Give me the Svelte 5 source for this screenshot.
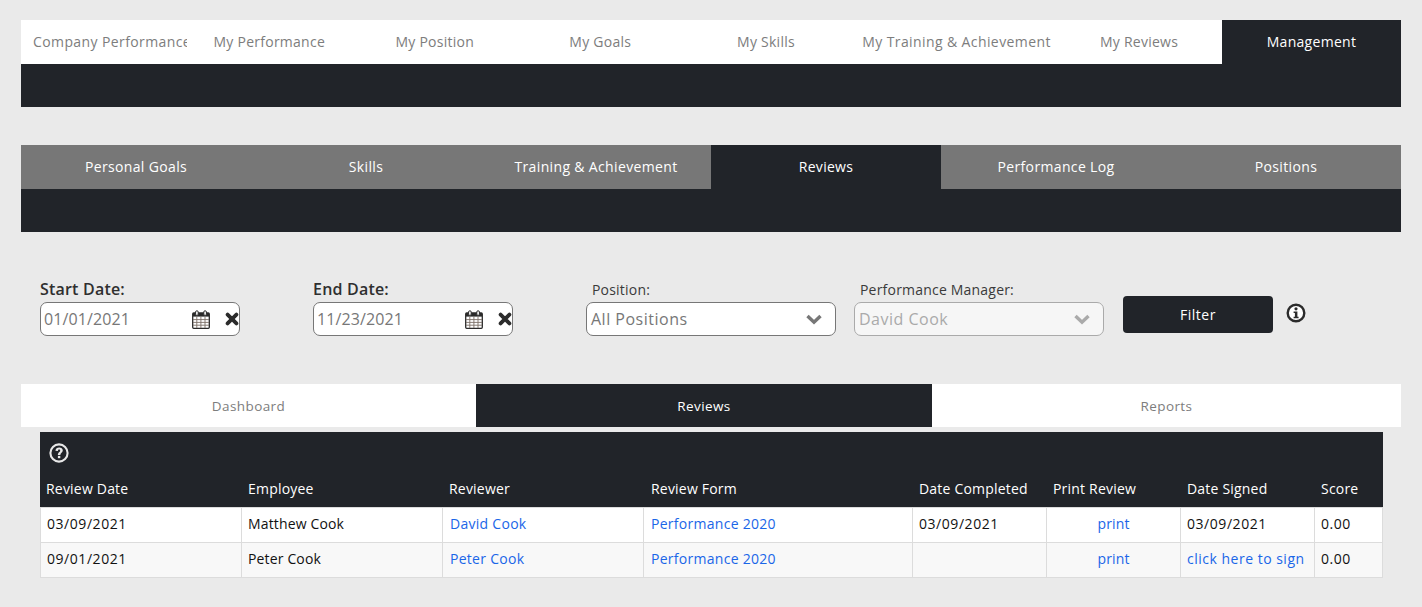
<script>
  const top = [
    { t: 'Company Performance', w: 165.5, cls: 'clip' },
    { t: 'My Performance', w: 165.5 },
    { t: 'My Position', w: 165.5 },
    { t: 'My Goals', w: 165.5 },
    { t: 'My Skills', w: 166 },
    { t: 'My Training & Achievement', w: 207, cls: 'shift' },
    { t: 'My Reviews', w: 166 },
    { t: 'Management', w: 179, cls: 'active' }
  ];
  const sub = ['Personal Goals', 'Skills', 'Training & Achievement', 'Reviews', 'Performance Log', 'Positions'];
  const inner = [
    { t: 'Dashboard', w: 455 },
    { t: 'Reviews', w: 456 },
    { t: 'Reports', w: 469 }
  ];
  const cols = ['Review Date', 'Employee', 'Reviewer', 'Review Form', 'Date Completed', 'Print Review', 'Date Signed', 'Score'];
  const rows = [
    ['03/09/2021', 'Matthew Cook', 'David Cook', 'Performance 2020', '03/09/2021', 'print', '03/09/2021', '0.00'],
    ['09/01/2021', 'Peter Cook', 'Peter Cook', 'Performance 2020', '', 'print', 'click here to sign', '0.00']
  ];
  const isLink = (v, i) => i === 2 || i === 3 || i === 5 || v === 'click here to sign';
  const isNum = (v) => /^[\d/.]+$/.test(v);
</script>

{#snippet calendar()}
  <svg class="cal" viewBox="0 0 18 19" width="18" height="19" aria-hidden="true">
    <rect x="0.7" y="3" width="16.6" height="15.3" rx="1" fill="#fff" stroke="#2a2a2a" stroke-width="1.3"/>
    <rect x="1" y="3" width="16" height="3.6" fill="#2a2a2a"/>
    <rect x="3.6" y="0.8" width="2.6" height="4.6" rx="1.2" fill="#fff" stroke="#2a2a2a"/>
    <rect x="11.8" y="0.8" width="2.6" height="4.6" rx="1.2" fill="#fff" stroke="#2a2a2a"/>
    <path d="M1 9.6H17M1 12.4H17M1 15.2H17M4.8 6.6V18M8.9 6.6V18M13 6.6V18" stroke="#7c6f68" stroke-width="0.9" fill="none"/>
  </svg>
{/snippet}

{#snippet cross()}
  <svg class="x" viewBox="0 0 14 14" width="14" height="14" aria-hidden="true">
    <path d="M2.6 2.6L11.4 11.4M11.4 2.6L2.6 11.4" stroke="#2b2b2b" stroke-width="3.8" stroke-linecap="round" fill="none"/>
  </svg>
{/snippet}

{#snippet chevron()}
  <svg class="chev" viewBox="0 0 18 12" width="18" height="12" aria-hidden="true">
    <path d="M2.5 3L9 9.2L15.5 3" stroke="currentColor" stroke-width="3.4" fill="none"/>
  </svg>
{/snippet}

<div class="page">
  <nav class="bar">
    <div class="tabs white">
      {#each top as tab}
        <div class="tab {tab.cls ?? ''}" style="width:{tab.w}px"><span>{tab.t}</span></div>
      {/each}
    </div>
    <div class="strip"></div>
  </nav>

  <nav class="bar second">
    <div class="tabs grey">
      {#each sub as t}
        <div class="tab even" class:active={t === 'Reviews'}>{t}</div>
      {/each}
    </div>
    <div class="strip"></div>
  </nav>

  <section class="filters">
    <div class="field date">
      <div class="bold">Start Date:</div>
      <div class="input"><span class="val">01/01/2021</span>{@render calendar()}{@render cross()}</div>
    </div>
    <div class="field date end">
      <div class="bold">End Date:</div>
      <div class="input"><span class="val">11/23/2021</span>{@render calendar()}{@render cross()}</div>
    </div>
    <div class="field sel pos">
      <div class="lab">Position:</div>
      <div class="select"><span>All Positions</span>{@render chevron()}</div>
    </div>
    <div class="field sel mgr">
      <div class="lab">Performance Manager:</div>
      <div class="select disabled"><span>David Cook</span>{@render chevron()}</div>
    </div>
    <button class="filter">Filter</button>
    <svg class="info" viewBox="0 0 20 20" width="20" height="20" aria-hidden="true">
      <circle cx="10" cy="10" r="8.3" fill="#fff" stroke="#2b2b2b" stroke-width="2.4"/>
      <circle cx="10" cy="5.8" r="1.6" fill="#2b2b2b"/>
      <path d="M7.6 8.4H11.4V13.8H12.6V15.3H7.6V13.8H8.9V9.9H7.6Z" fill="#2b2b2b"/>
    </svg>
  </section>

  <div class="tabs inner">
    {#each inner as tab}
      <div class="tab" class:active={tab.t === 'Reviews'} style="width:{tab.w}px">{tab.t}</div>
    {/each}
  </div>

  <section class="tablewrap">
    <div class="helprow">
      <svg viewBox="0 0 20 20" width="20" height="20" aria-hidden="true">
        <circle cx="10" cy="10" r="8.6" fill="none" stroke="#e8e8e8" stroke-width="2.1"/>
        <path d="M6.4 7.8C6.5 5.6 8.2 4.4 10.2 4.4C12.2 4.4 13.8 5.6 13.8 7.5C13.8 9.7 11.3 9.9 11.3 12H8.9C8.9 9.2 11.2 9 11.2 7.7C11.2 7 10.8 6.6 10.1 6.6C9.4 6.6 9 7.1 8.9 7.9Z" fill="#e8e8e8"/>
        <rect x="8.9" y="12.9" width="2.4" height="2.3" fill="#e8e8e8"/>
      </svg>
    </div>
    <table>
      <colgroup>
        <col style="width:202px"/><col style="width:201px"/><col style="width:201px"/><col style="width:269px"/>
        <col style="width:134px"/><col style="width:134px"/><col style="width:134px"/><col style="width:68px"/>
      </colgroup>
      <thead>
        <tr>{#each cols as c, i}<th class:form={i === 3}>{c}</th>{/each}</tr>
      </thead>
      <tbody>
        {#each rows as row}
          <tr>
            {#each row as v, i}
              <td class:center={i === 5} class:num={isNum(v)} class:sign={v === 'click here to sign'} class:pad={i === 2 || i === 3}>
                {#if isLink(v, i)}<span class="link">{v}</span>{:else}{v}{/if}
              </td>
            {/each}
          </tr>
        {/each}
      </tbody>
    </table>
  </section>
</div>

<style>
  :global(body) {
    margin: 0;
    background: #eaeaea;
    font-family: "Open Sans", "Liberation Sans", sans-serif;
  }
  .page {
    padding: 20px 21px 0;
    height: 587px;
    overflow: hidden;
    font-size: 14px;
    letter-spacing: 0.1px;
  }
  .bar { display: block; }
  .second { margin-top: 38px; }
  .tabs { display: flex; height: 44px; }
  .tab {
    box-sizing: border-box;
    display: flex;
    align-items: center;
    justify-content: center;
    white-space: nowrap;
    overflow: hidden;
    flex: none;
    padding-bottom: 2px;
  }
  .even { flex: 1 1 0; }
  .white { background: #fff; color: #7d7d7d; letter-spacing: 0.25px; }
  .clip { justify-content: flex-start; padding-left: 12px; letter-spacing: 0.4px; }
  .shift { padding-left: 8px; letter-spacing: 0.4px; }
  .grey { background: #777; color: #fff; font-weight: 500; letter-spacing: 0.35px; }
  .tab.active { background: #212429; color: #fff; font-weight: 500; letter-spacing: 0.3px; }
  .strip { height: 43px; background: #212429; }

  .filters {
    display: flex;
    align-items: flex-start;
    height: 152px;
    padding: 44px 0 0 19px;
    box-sizing: border-box;
    color: #333;
  }
  .field { flex: none; }
  .date { width: 200px; margin-right: 73px; }
  .bold { font-size: 16px; font-weight: 600; line-height: 26px; color: #2f2f2f; letter-spacing: 0.2px; }
  .input, .select {
    box-sizing: border-box;
    display: flex;
    align-items: center;
    height: 34px;
    background: #fff;
    border: 1px solid #777;
    border-radius: 7px;
  }
  .input { padding-left: 3px; width: 200px; overflow: hidden; }
  .val { flex: 1; color: #777; font-size: 16px; }
  .cal { margin-right: 15px; }
  .x { margin-right: 0; }
  .sel { width: 250px; }
  .pos { margin-right: 18px; }
  .mgr { margin-right: 19px; }
  .lab { font-size: 14px; line-height: 25px; padding: 1px 0 0 6px; color: #3a3a3a; letter-spacing: 0.2px; }
  .select {
    justify-content: space-between;
    padding: 0 12px 0 4px;
    font-size: 16px;
    color: #777;
    letter-spacing: 0.5px;
  }
  .chev { color: #777; }
  .disabled { background: #f6f6f6; border-color: #aaa; color: #aaa; }
  .disabled .chev { color: #aaa; }
  .filter {
    flex: none;
    box-sizing: border-box;
    width: 150px;
    height: 37px;
    margin-top: 20px;
    border: none;
    border-radius: 4px;
    background: #212429;
    color: #fff;
    font: 500 14px "Open Sans", "Liberation Sans", sans-serif;
    letter-spacing: 0.5px;
  }
  .info { flex: none; margin: 27px 0 0 13px; }

  .inner { height: 43px; background: #fff; color: #7d7d7d; }
  .inner .tab { font-size: 13.5px; letter-spacing: 0.4px; padding-bottom: 0; }

  .tablewrap { margin: 5px 18px 0 19px; background: #212429; }
  .helprow { height: 40px; display: flex; align-items: center; padding: 2px 0 0 9px; box-sizing: border-box; }
  table {
    width: 1343px;
    table-layout: fixed;
    border-collapse: separate;
    border-spacing: 0;
    background: #fff;
    color: #111;
    letter-spacing: 0.15px;
  }
  th {
    background: #212429;
    color: #fff;
    font-weight: 500;
    text-align: left;
    height: 35px;
    padding: 0 6px 2px;
    box-sizing: border-box;
    white-space: nowrap;
    overflow: hidden;
    letter-spacing: 0.2px;
  }
  th.form { padding-left: 7px; }
  td {
    height: 35px;
    padding: 0 6px 3px;
    box-sizing: border-box;
    border-right: 1px solid #dcdcdc;
    border-bottom: 1px solid #dcdcdc;
    white-space: nowrap;
  }
  td.pad { padding-left: 7px; }
  td:first-child { border-left: 1px solid #dcdcdc; }
  tbody tr:first-child td { border-top: 1px solid #dcdcdc; height: 36px; }
  td.num { letter-spacing: 0.55px; }
  td.sign { letter-spacing: 0.5px; }
  tbody tr:nth-child(2) td { background: #f8f8f8; }
  .center { text-align: center; }
  .link { color: #1a66e8; }
  td.pad .link { letter-spacing: 0.28px; }
</style>
